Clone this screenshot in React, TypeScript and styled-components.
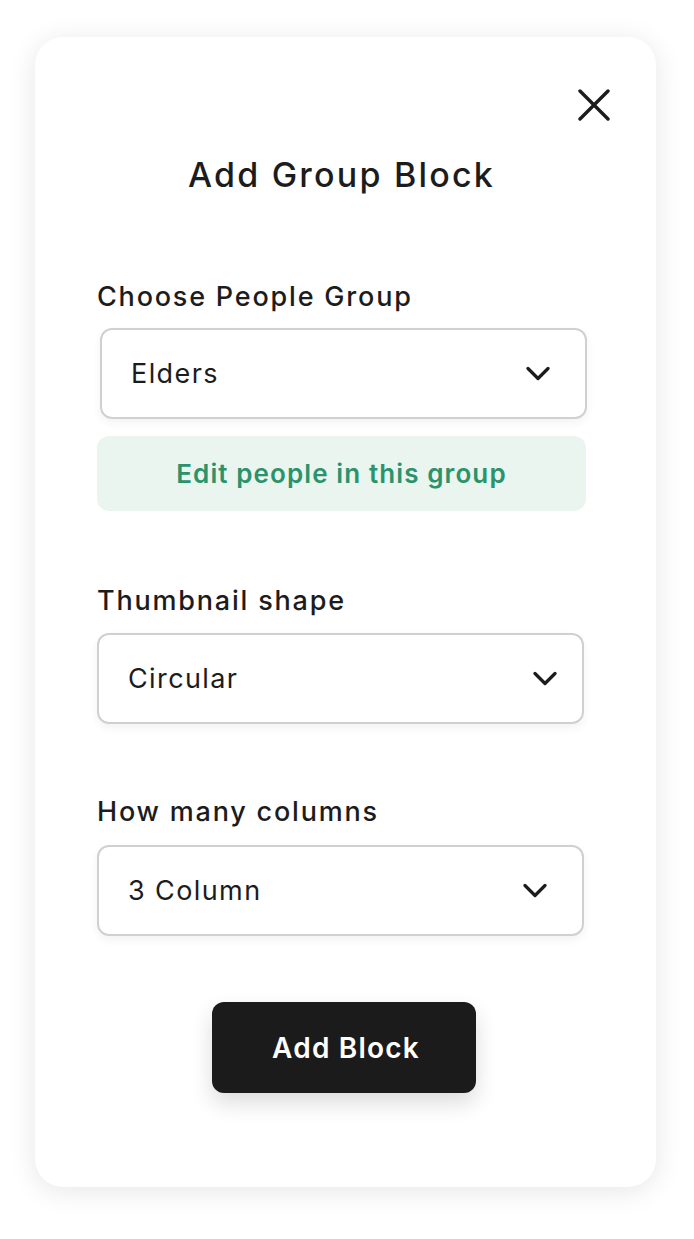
import React from 'react';
import styled, { createGlobalStyle } from 'styled-components';

const Global = createGlobalStyle`
  html, body {
    margin: 0;
    padding: 0;
    background: #ffffff;
  }
  body {
    font-family: Inter, 'Noto Sans', sans-serif;
    color: #1c1c1c;
  }
`;

const Page = styled.div`
  padding: 37px 38px 52px 35px;
`;

const Card = styled.div`
  width: 621px;
  height: 1150px;
  box-sizing: border-box;
  background: #ffffff;
  border-radius: 28px;
  box-shadow: 0 4px 28px rgba(0, 0, 0, 0.1);
  padding: 52px 72px 0 62px;
  display: flex;
  flex-direction: column;
`;

const CloseRow = styled.div`
  display: flex;
  justify-content: flex-end;
  margin-right: -26px;
  height: 32px;
`;

const CloseButton = styled.button`
  border: 0;
  background: none;
  padding: 0;
  width: 32px;
  height: 32px;
  cursor: pointer;
  color: #1c1c1c;
  svg {
    display: block;
  }
`;

const Title = styled.h1`
  margin: 34px 0 0 2px;
  font-size: 34px;
  line-height: 40px;
  font-weight: 500;
  text-align: center;
  letter-spacing: 2.2px;
`;

const Label = styled.label<{ $top: number }>`
  display: block;
  margin-top: ${({ $top }) => $top}px;
  font-size: 27px;
  line-height: 34px;
  font-weight: 500;
  letter-spacing: 1.8px;
`;

const Select = styled.div<{ $shift?: number; $chevronPad?: number; $top: number }>`
  margin-top: ${({ $top }) => $top}px;
  margin-left: ${({ $shift }) => $shift ?? 0}px;
  margin-right: ${({ $shift }) => -($shift ?? 0)}px;
  height: 91px;
  box-sizing: border-box;
  border: 2px solid #d0d0d0;
  border-radius: 12px;
  box-shadow: 0 4px 10px rgba(0, 0, 0, 0.05);
  padding: 0 ${({ $chevronPad }) => $chevronPad ?? 35}px 0 29px;
  display: flex;
  align-items: center;
  justify-content: space-between;
  font-size: 27px;
  letter-spacing: 1.4px;
  color: #1c1c1c;
`;

const EditButton = styled.button`
  margin-top: 17px;
  margin-right: -2px;
  height: 75px;
  border: 0;
  border-radius: 12px;
  background: #eaf5ef;
  color: #2a936b;
  font-family: inherit;
  font-size: 26px;
  font-weight: 600;
  letter-spacing: 1.1px;
  cursor: pointer;
`;

const Footer = styled.div`
  display: flex;
  justify-content: center;
  margin-top: 66px;
  margin-right: -7px;
`;

const AddButton = styled.button`
  width: 264px;
  height: 91px;
  border: 0;
  border-radius: 12px;
  background: #1b1b1b;
  color: #ffffff;
  font-family: inherit;
  font-size: 28px;
  font-weight: 600;
  letter-spacing: 1.2px;
  padding: 0 0 0 4px;
  box-shadow: 0 10px 22px rgba(0, 0, 0, 0.14);
  cursor: pointer;
`;

const Chevron = () => (
  <svg width="24" height="15" viewBox="0 0 24 15" fill="none">
    <path d="M2 2.5 L12 12.5 L22 2.5" stroke="#1c1c1c" strokeWidth="3.2" strokeLinecap="round" strokeLinejoin="round" />
  </svg>
);

type DropdownProps = {
  value: string;
  top: number;
  shift?: number;
  chevronPad?: number;
};

const Dropdown = ({ value, top, shift, chevronPad }: DropdownProps) => (
  <Select $top={top} $shift={shift} $chevronPad={chevronPad}>
    <span>{value}</span>
    <Chevron />
  </Select>
);

export default function App() {
  return (
    <Page>
      <Global />
      <Card>
        <CloseRow>
          <CloseButton aria-label="Close">
            <svg width="32" height="32" viewBox="0 0 32 32" fill="none">
              <path d="M2 2 L30 30 M30 2 L2 30" stroke="#1c1c1c" strokeWidth="3.4" strokeLinecap="round" />
            </svg>
          </CloseButton>
        </CloseRow>
        <Title>Add Group Block</Title>

        <Label $top={85}>Choose People Group</Label>
        <Dropdown value="Elders" top={14} shift={3} chevronPad={35} />
        <EditButton>Edit people in this group</EditButton>

        <Label $top={73}>Thumbnail shape</Label>
        <Dropdown value="Circular" top={15} chevronPad={25} />

        <Label $top={71}>How many columns</Label>
        <Dropdown value="3 Column" top={16} chevronPad={35} />

        <Footer>
          <AddButton>Add Block</AddButton>
        </Footer>
      </Card>
    </Page>
  );
}
